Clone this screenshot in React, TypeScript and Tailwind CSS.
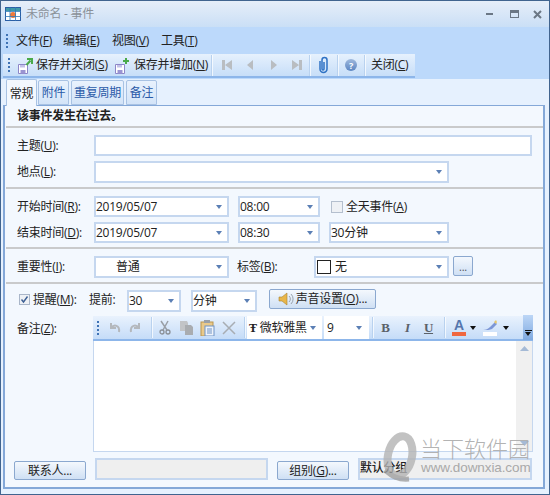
import React from "react";

const Arrow = ({ color = "#5b7fb5" }: { color?: string }) => (
  <svg width="6" height="4" viewBox="0 0 6 4" className="shrink-0"><path d="M0 0h6L3 4z" fill={color} /></svg>
);

const Field = ({ className, text, arrow = true, children }: { className: string; text?: string; arrow?: boolean; children?: React.ReactNode }) => (
  <div className={`flex items-center justify-between border-2 border-[#c5d7ef] bg-white pl-0 pr-[5px] text-[12px] text-[#222] ${className}`}>
    <span className="flex items-center whitespace-nowrap">{children ?? text}</span>
    {arrow && <Arrow />}
  </div>
);

const Sep = () => <div className="mx-[1px] h-[2px] w-[537px] bg-[#c9cacb]" />;
const TSep = ({ className }: { className: string }) => <div className={`h-[21px] w-[2px] shrink-0 border-l border-[#b9d2ef] bg-white/70 ${className}`} />;

const Grip = ({ className }: { className: string }) => (
  <div className={`flex shrink-0 flex-col gap-[2px] ${className}`}>
    {[0, 1, 2, 3].map((i) => <div key={i} className="h-[2px] w-[2px] bg-[#3f73b5]" />)}
  </div>
);

const Btn = ({ className, children }: { className: string; children: React.ReactNode }) => (
  <div className={`flex items-center justify-center rounded-[2px] border border-[#8ba8cf] bg-gradient-to-b from-[#f4f8fd] to-[#cfe0f4] text-[12px] text-[#222] ${className}`}>{children}</div>
);

const Save = ({ plus }: { plus?: boolean }) => (
  <svg width="16" height="17" viewBox="0 0 16 17" className="shrink-0">
    <path d="M1.500 7.500h9v9h-9z" fill="#fff" stroke="#8d86c8" />
    <path d="M3 8h5v2.500H3z" fill="#c3c1e8" />
    <path d="M3.500 13h5v3.500h-5z" fill="#9a94d2" />
    {plus ? <path d="M12 1v6M9 4h6" stroke="#4aaa4a" strokeWidth="2" /> : <path d="M9.500 8l4-4.500M10 2h5v5" stroke="#4aaa4a" strokeWidth="2" fill="none" />}
  </svg>
);

const Nav = ({ d, className }: { d: string; className: string }) => (
  <svg width="11" height="12" viewBox="0 0 11 12" className={`shrink-0 ${className}`}><path d={d} fill="#b9bdc1" /></svg>
);

export default function App() {
  return (
    <div className="relative h-[495px] w-[550px] overflow-hidden border-x border-t border-b border-[#41648f] bg-[#e6f1fe] font-['Open_Sans','Noto_Sans_CJK_SC',sans-serif] text-[12px] tracking-[-0.25px] text-[#222]">
      {/* Title bar */}
      <div className="flex h-[26px] items-center bg-gradient-to-b from-[#e6eef9] to-[#cadff6]">
        <svg width="16" height="14" viewBox="0 0 16 14" className="ml-[4px] shrink-0">
          <rect x="0.5" y="0.5" width="15" height="13" fill="#fff" stroke="#2b5fa5" />
          <rect x="1" y="1" width="14" height="3" fill="#3f9aa8" />
          <circle cx="8" cy="8" r="3" fill="#f07a3a" />
          <path d="M0 4.500h16M0 9.500h16M5 0v14M10.500 0v14" stroke="#2f78b8" strokeWidth="0.800" />
        </svg>
        <span className="ml-[5px] whitespace-nowrap text-[12px] text-[#8a9199]">未命名 - 事件</span>
        <div className="ml-auto flex items-center pr-[7px]">
          <div className="h-[2px] w-[7px] bg-[#6b7785]" />
          <div className="ml-[17px] h-[8px] w-[9px] border border-t-[3px] border-[#6b7785]" />
          <svg width="9" height="9" viewBox="0 0 9 9" className="ml-[14px]"><path d="M1 1l7 7M8 1L1 8" stroke="#6b7785" strokeWidth="2" /></svg>
        </div>
      </div>

      {/* Menu + toolbar band */}
      <div className="h-[52px] bg-[#bcd9fb]">
        <div className="flex h-[27px] items-center">
          <Grip className="ml-[5px]" />
          <span className="ml-[8px] w-[47px] whitespace-nowrap">文件(<u>F</u>)</span>
          <span className="w-[49px] whitespace-nowrap">编辑(<u>E</u>)</span>
          <span className="w-[49px] whitespace-nowrap">视图(<u>V</u>)</span>
          <span className="whitespace-nowrap">工具(<u>T</u>)</span>
        </div>
        <div className="ml-[2px] flex h-[24px] w-[412px] items-center border-b-2 border-[#8db6ea] bg-gradient-to-b from-[#e6f1fd] to-[#c7def8]">
          <Grip className="ml-[5px]" />
          <div className="ml-[7px]"><Save /></div>
          <span className="ml-[3px] w-[72px] whitespace-nowrap">保存并关闭(<u>S</u>)</span>
          <div className="ml-[6px]"><Save plus /></div>
          <span className="ml-[4px] w-[73px] whitespace-nowrap">保存并增加(<u>N</u>)</span>
          <TSep className="ml-[4px]" />
          <Nav className="ml-[9px]" d="M0 1h3v10H0zM10 1v10L3 6z" />
          <Nav className="ml-[12px]" d="M8 1v10L2 6z" />
          <Nav className="ml-[12px]" d="M3 1v10l6-5z" />
          <Nav className="ml-[12px]" d="M8 1h3v10H8zM1 1v10l7-5z" />
          <TSep className="ml-[7px]" />
          <svg width="11" height="18" viewBox="0 0 11 18" className="ml-[7px] shrink-0">
            <path d="M2 5v8a3.500 3.500 0 0 0 7 0V4a2.500 2.500 0 0 0-5 0v9a1 1 0 0 0 2 0V6" fill="none" stroke="#2f72c4" strokeWidth="1.500" />
          </svg>
          <TSep className="ml-[8px]" />
          <div className="ml-[6px] flex h-[12px] w-[12px] shrink-0 items-center justify-center rounded-full bg-gradient-to-b from-[#9fb9dd] to-[#5c86c2] text-[9px] font-bold leading-none text-white">?</div>
          <TSep className="ml-[7px]" />
          <span className="ml-[5px] whitespace-nowrap">关闭(<u>C</u>)</span>
        </div>
      </div>

      {/* Tabs */}
      <div className="flex h-[26px] items-end pl-[5px]">
        <div className="relative z-10 -mb-px flex h-[27px] w-[31px] items-center justify-center rounded-t-[2px] border border-b-0 border-[#a8c2e3] bg-[#f3f8fe] pt-[1px] text-[#222]">常规</div>
        <div className="ml-[1px] flex h-[25px] w-[31px] items-center justify-center rounded-t-[2px] border border-[#a8c2e3] bg-gradient-to-b from-[#e9f2fd] to-[#d3e4f8] pt-[1px] text-[#2a5aa8]">附件</div>
        <div className="ml-[2px] flex h-[25px] w-[53px] items-center justify-center rounded-t-[2px] border border-[#a8c2e3] bg-gradient-to-b from-[#e9f2fd] to-[#d3e4f8] pt-[1px] text-[#2a5aa8]">重复周期</div>
        <div className="ml-[2px] flex h-[25px] w-[31px] items-center justify-center rounded-t-[2px] border border-[#a8c2e3] bg-gradient-to-b from-[#e9f2fd] to-[#d3e4f8] pt-[1px] text-[#2a5aa8]">备注</div>
      </div>

      {/* Panel */}
      <div className="ml-[2px] h-[384px] w-[542px] border-x-2 border-t border-b-2 border-[#84a8d8] bg-[#f3f8fe]">
        <div className="flex h-[20px] items-center pl-[12px] font-bold">该事件发生在过去。</div>
        <Sep />

        <div className="mt-[7px] flex h-[21px] pl-[12px]">
          <div className="flex w-[77px] items-center whitespace-nowrap">主题(<u>U</u>):</div>
          <Field className="w-[438px]" arrow={false} />
        </div>
        <div className="mb-[4px] mt-[5px] flex h-[22px] pl-[12px]">
          <div className="flex w-[77px] items-center whitespace-nowrap">地点(<u>L</u>):</div>
          <Field className="w-[355px]" />
        </div>
        <Sep />

        <div className="mt-[7px] flex h-[21px] items-center pl-[12px]">
          <div className="w-[77px] whitespace-nowrap">开始时间(<u>R</u>):</div>
          <Field className="h-[21px] w-[135px]" text="2019/05/07" />
          <Field className="ml-[9px] h-[21px] w-[82px]" text="08:00" />
          <div className="ml-[11px] h-[12px] w-[12px] shrink-0 border border-[#b4bfce] bg-[#eef1f5]" />
          <span className="ml-[3px] whitespace-nowrap">全天事件(<u>A</u>)</span>
        </div>
        <div className="mb-[4px] mt-[5px] flex h-[21px] items-center pl-[12px]">
          <div className="w-[77px] whitespace-nowrap">结束时间(<u>D</u>):</div>
          <Field className="h-[21px] w-[135px]" text="2019/05/07" />
          <Field className="ml-[9px] h-[21px] w-[82px]" text="08:30" />
          <Field className="ml-[9px] h-[21px] w-[120px]" text="30分钟" />
        </div>
        <Sep />

        <div className="mb-[4px] mt-[7px] flex h-[22px] items-center pl-[12px]">
          <div className="w-[77px] whitespace-nowrap">重要性(<u>I</u>):</div>
          <Field className="h-[22px] w-[135px] !pl-[20px]" text="普通" />
          <div className="ml-[8px] w-[77px] whitespace-nowrap">标签(<u>B</u>):</div>
          <Field className="h-[22px] w-[135px]">
            <span className="ml-[1px] mr-[4px] inline-block h-[14px] w-[14px] border border-[#222] bg-white" />
            无
          </Field>
          <Btn className="mb-[3px] ml-[4px] h-[20px] w-[20px] self-start"><span className="text-[11px] leading-none text-[#555]">...</span></Btn>
        </div>
        <Sep />

        <div className="mt-[5px] flex h-[23px] items-start pl-[14px]">
          <div className="mt-[5px] flex h-[11px] w-[11px] shrink-0 items-center justify-center border border-[#a9b6c9] bg-[#eef1f5]">
            <svg width="9" height="9" viewBox="0 0 9 9"><path d="M1.500 4.500l2 2.500 4-5.500" fill="none" stroke="#3c5f94" strokeWidth="1.400" /></svg>
          </div>
          <span className="ml-[3px] mt-[2px] w-[56px] whitespace-nowrap">提醒(<u>M</u>):</span>
          <span className="mt-[2px] w-[38px] whitespace-nowrap">提前:</span>
          <Field className="mt-[1px] h-[22px] w-[54px]" text="30" />
          <Field className="ml-[10px] mt-[1px] h-[22px] w-[66px]" text="分钟" />
          <Btn className="ml-[12px] h-[20px] w-[107px]">
            <svg width="16" height="16" viewBox="0 0 16 16" className="mr-[2px] shrink-0">
              <path d="M1 6h3l5-4v12l-5-4H1z" fill="#e8b64a" stroke="#a98430" strokeWidth="0.600" />
              <path d="M11 5a4 4 0 0 1 0 6M13 3a7 7 0 0 1 0 10" fill="none" stroke="#9aa3ad" />
            </svg>
            <span className="whitespace-nowrap">声音设置(<u>O</u>)...</span>
          </Btn>
        </div>

        <div className="mt-[4px] flex h-[136px] pl-[12px]">
          <div className="w-[76px] whitespace-nowrap pt-[4px]">备注(<u>Z</u>):</div>
          <div className="flex h-[136px] w-[440px] flex-col border-x border-b border-[#c5d7ef] bg-white">
            <div className="-mx-px flex h-[25px] shrink-0 items-center border-b-2 border-[#8db6ea] bg-gradient-to-b from-[#e9f2fd] to-[#c5dcf8]">
              <Grip className="ml-[4px]" />
              <svg width="12" height="12" viewBox="0 0 12 12" className="ml-[10px] shrink-0"><path d="M2 1v5h5M2 6c3-4 9-3 8 4" fill="none" stroke="#b4b8bd" strokeWidth="2" /></svg>
              <svg width="12" height="12" viewBox="0 0 12 12" className="ml-[8px] shrink-0"><path d="M10 1v5H5M10 6C7 2 1 3 2 10" fill="none" stroke="#b4b8bd" strokeWidth="2" /></svg>
              <TSep className="ml-[10px]" />
              <svg width="12" height="15" viewBox="0 0 12 15" className="ml-[6px] shrink-0"><path d="M2 1l6 9M9 1L4 10" stroke="#9a9fa6" strokeWidth="1.500" /><circle cx="3" cy="12" r="2" fill="none" stroke="#8a8f96" strokeWidth="1.300" /><circle cx="9" cy="12" r="2" fill="none" stroke="#8a8f96" strokeWidth="1.300" /></svg>
              <svg width="15" height="14" viewBox="0 0 15 14" className="ml-[8px] shrink-0"><path d="M1 0h7l1 2v8H1z" fill="#c2c4c7" /><path d="M6 4h6l2 2v8H6z" fill="#a9acb0" /></svg>
              <svg width="15" height="16" viewBox="0 0 15 16" className="ml-[6px] shrink-0"><rect x="1" y="2" width="12" height="14" fill="#e9c98a" stroke="#b9954f" /><path d="M4 0h6v3H4z" fill="#9aa0a8" /><rect x="5" y="6" width="9" height="10" fill="#eef3fa" stroke="#6f93c6" /><path d="M7 9h5M7 11h5M7 13h5" stroke="#6f93c6" /></svg>
              <svg width="14" height="14" viewBox="0 0 14 14" className="ml-[7px] shrink-0"><path d="M1 1l12 12M13 1L1 13" stroke="#a8adb3" strokeWidth="1.500" /></svg>
              <TSep className="ml-[8px]" />
              <div className="ml-[1px] flex h-[23px] w-[75px] shrink-0 items-center justify-between bg-white pl-[2px] pr-[6px]">
                <span className="flex items-center whitespace-nowrap text-[12px]"><span className="mr-[3px] font-['Liberation_Serif',serif] text-[12px] font-bold leading-none">Ŧ</span>微软雅黑</span>
                <Arrow />
              </div>
              <div className="ml-[2px] flex h-[23px] w-[45px] shrink-0 items-center justify-between bg-white pl-[3px] pr-[7px] text-[12px]"><span>9</span><Arrow /></div>
              <TSep className="ml-[3px]" />
              <span className="ml-[3px] w-[17px] text-center font-['Liberation_Serif',serif] text-[13px] font-bold text-[#5a6169]">B</span>
              <span className="ml-[5px] w-[17px] text-center font-['Liberation_Serif',serif] text-[13px] font-bold italic text-[#5a6169]">I</span>
              <span className="ml-[4px] w-[17px] text-center font-['Liberation_Serif',serif] text-[13px] font-bold text-[#5a6169] underline">U</span>
              <TSep className="ml-[7px]" />
              <div className="ml-[6px] flex w-[14px] shrink-0 flex-col items-center">
                <span className="font-['Liberation_Sans',sans-serif] text-[14px] font-bold leading-[13px] text-[#5576ad]">A</span>
                <div className="h-[4px] w-[14px] bg-[#f0673f]" />
              </div>
              <div className="ml-[4px]"><Arrow color="#111" /></div>
              <svg width="16" height="17" viewBox="0 0 16 17" className="ml-[6px] shrink-0">
                <path d="M1 11c3 0 5-1 7-3l5-5 2 2-5 5c-2 1-5 1-9 1z" fill="#7d97d6" />
                <path d="M12 3l2-2 1 2-1 2z" fill="#e7c76a" />
                <rect x="1" y="13" width="14" height="4" fill="#fff" />
              </svg>
              <div className="ml-[5px]"><Arrow color="#111" /></div>
              <div className="ml-auto flex h-[25px] w-[10px] shrink-0 flex-col items-center justify-end gap-[1px] bg-gradient-to-b from-[#bcd6f6] to-[#7fa9e0] pb-[4px]">
                <div className="h-px w-[7px] bg-[#111]" />
                <Arrow color="#111" />
              </div>
            </div>
            <div className="flex min-h-0 flex-1 justify-end">
              <div className="flex w-[16px] flex-col items-center justify-between bg-[#f0f0f0] py-[5px]">
                <svg width="9" height="5" viewBox="0 0 9 5"><path d="M0 5h9L4.500 0z" fill="#a5bad6" /></svg>
                <svg width="9" height="5" viewBox="0 0 9 5"><path d="M0 0h9L4.500 5z" fill="#a5bad6" /></svg>
              </div>
            </div>
          </div>
        </div>

        <div className="mt-[6px] flex h-[22px] items-end pl-[9px]">
          <Btn className="h-[19px] w-[72px]">联系人...</Btn>
          <div className="ml-[9px] h-[22px] w-[173px] border-2 border-[#c5d7ef] bg-[#efefef]" />
          <Btn className="ml-[9px] h-[19px] w-[72px]"><span className="whitespace-nowrap">组别(<u>G</u>)...</span></Btn>
          <div className="ml-[9px] flex h-[22px] w-[174px] items-center border-2 border-[#c5d7ef] bg-[#efefef] pb-[2px] pl-0 font-medium">默认分组</div>
        </div>
      </div>

      {/* Watermark */}
      <svg width="40" height="62" viewBox="0 0 40 62" className="absolute left-[378px] top-[431px] z-20 opacity-80">
        <ellipse cx="21" cy="24" rx="12" ry="20" fill="none" stroke="#b4b4b4" strokeWidth="8" transform="rotate(12 21 24)" />
        <path d="M6 38c7 6 13 10 24 9" fill="none" stroke="#a0a0a0" strokeWidth="5" />
      </svg>
      <div className="absolute left-[419px] top-[434px] z-20 whitespace-nowrap font-['Noto_Sans_CJK_SC',sans-serif] text-[22px] font-light leading-[24px] tracking-normal text-[#a9a9a9]/90">当下软件园</div>
      <div className="absolute left-[420px] top-[459px] z-20 whitespace-nowrap font-['Liberation_Sans',sans-serif] text-[13.500px] leading-[16px] tracking-[-0.1px] text-[#a9a9a9]">www.downxia.com</div>
    </div>
  );
}
